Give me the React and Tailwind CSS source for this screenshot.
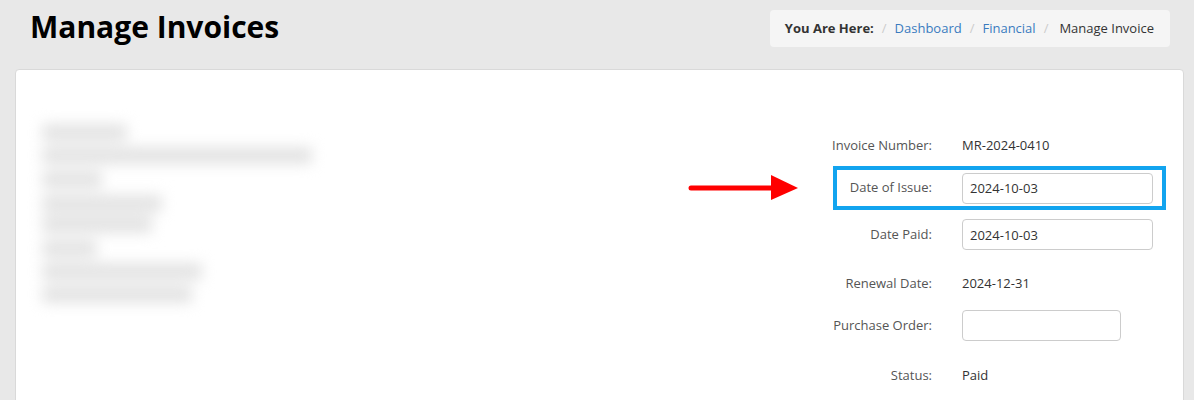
import React from 'react'

const font = { fontFamily: '"Open Sans", "Liberation Sans", sans-serif' }

function Breadcrumb() {
  return (
    <div className="mt-[10px] mr-[24px] flex h-[37px] items-center rounded-[4px] bg-[#f5f5f5] pl-[15px] pr-[16px] text-[13px]">
      <span className="font-bold text-[#333]">You Are Here:</span>
      <span className="px-[8px] text-[#ccc]">/</span>
      <a className="text-[#3a7bbf]">Dashboard</a>
      <span className="px-[8px] text-[#ccc]">/</span>
      <a className="text-[#3a7bbf]">Financial</a>
      <span className="px-[8px] pr-[11px] text-[#ccc]">/</span>
      <span className="text-[#333]">Manage Invoice</span>
    </div>
  )
}

function BlurredAddress() {
  const lines = [
    { w: 85, mt: 0 },
    { w: 270, mt: 6 },
    { w: 60, mt: 7 },
    { w: 120, mt: 7 },
    { w: 110, mt: 4 },
    { w: 55, mt: 7 },
    { w: 160, mt: 6 },
    { w: 150, mt: 6 },
  ]
  return (
    <div className="ml-[26px] mt-[54px] flex flex-col blur-[7px]">
      {lines.map((l, i) => (
        <div
          key={i}
          className="h-[17px] rounded bg-[#e3e3e3]"
          style={{ width: l.w, marginTop: l.mt }}
        />
      ))}
    </div>
  )
}

function Row({ label, children, className = '' }) {
  return (
    <div className={'flex items-center border-[4px] pr-[9px] ' + className}>
      <div className="flex w-[95px] shrink-0 justify-end whitespace-nowrap text-[13px] text-[#555]">
        <span>{label}</span>
      </div>
      <div className="ml-[30px] text-[13px] text-[#333]">{children}</div>
    </div>
  )
}

function Field({ value = '', w = 191 }) {
  return (
    <input
      readOnly
      value={value}
      style={{ width: w }}
      className="h-[31px] rounded-[4px] border border-[#ccc] px-[7px] text-[13px] text-[#333] outline-none"
    />
  )
}

export default function App() {
  return (
    <div className="min-h-[400px] bg-[#e8e8e8]" style={font}>
      <div className="flex items-start justify-between">
        <h1 className="ml-[30px] mt-[6px] text-[30px] font-bold leading-[42px] text-black">
          Manage Invoices
        </h1>
        <Breadcrumb />
      </div>

      <div className="relative ml-[15px] mr-[10px] mt-[21px] flex h-[340px] justify-between rounded-t-[4px] border border-[#d9d9d9] bg-white">
        <BlurredAddress />

        {/* red arrow pointing to the highlighted field */}
        <svg
          className="absolute left-[672px] top-[104px]"
          width="112"
          height="28"
          viewBox="0 0 112 28"
        >
          <line x1="3" y1="14" x2="86" y2="14" stroke="#f00" strokeWidth="5" strokeLinecap="round" />
          <polygon points="83,1 110,14 83,26" fill="#f00" />
        </svg>

        <div className="mr-[17px] mt-[58px] flex w-[333px] flex-col">
          <Row label="Invoice Number:" className="h-[36px] border-transparent">
            MR-2024-0410
          </Row>
          <Row label="Date of Issue:" className="mt-[2px] h-[44px] border-[#12a4ef]">
            <Field value="2024-10-03" />
          </Row>
          <Row label="Date Paid:" className="mt-[5px] h-[39px] border-transparent">
            <Field value="2024-10-03" />
          </Row>
          <Row label="Renewal Date:" className="mt-[12px] h-[36px] border-transparent">
            2024-12-31
          </Row>
          <Row label="Purchase Order:" className="mt-[4px] h-[39px] border-transparent">
            <Field w={159} />
          </Row>
          <Row label="Status:" className="mt-[13px] h-[36px] border-transparent">
            Paid
          </Row>
        </div>
      </div>
    </div>
  )
}
